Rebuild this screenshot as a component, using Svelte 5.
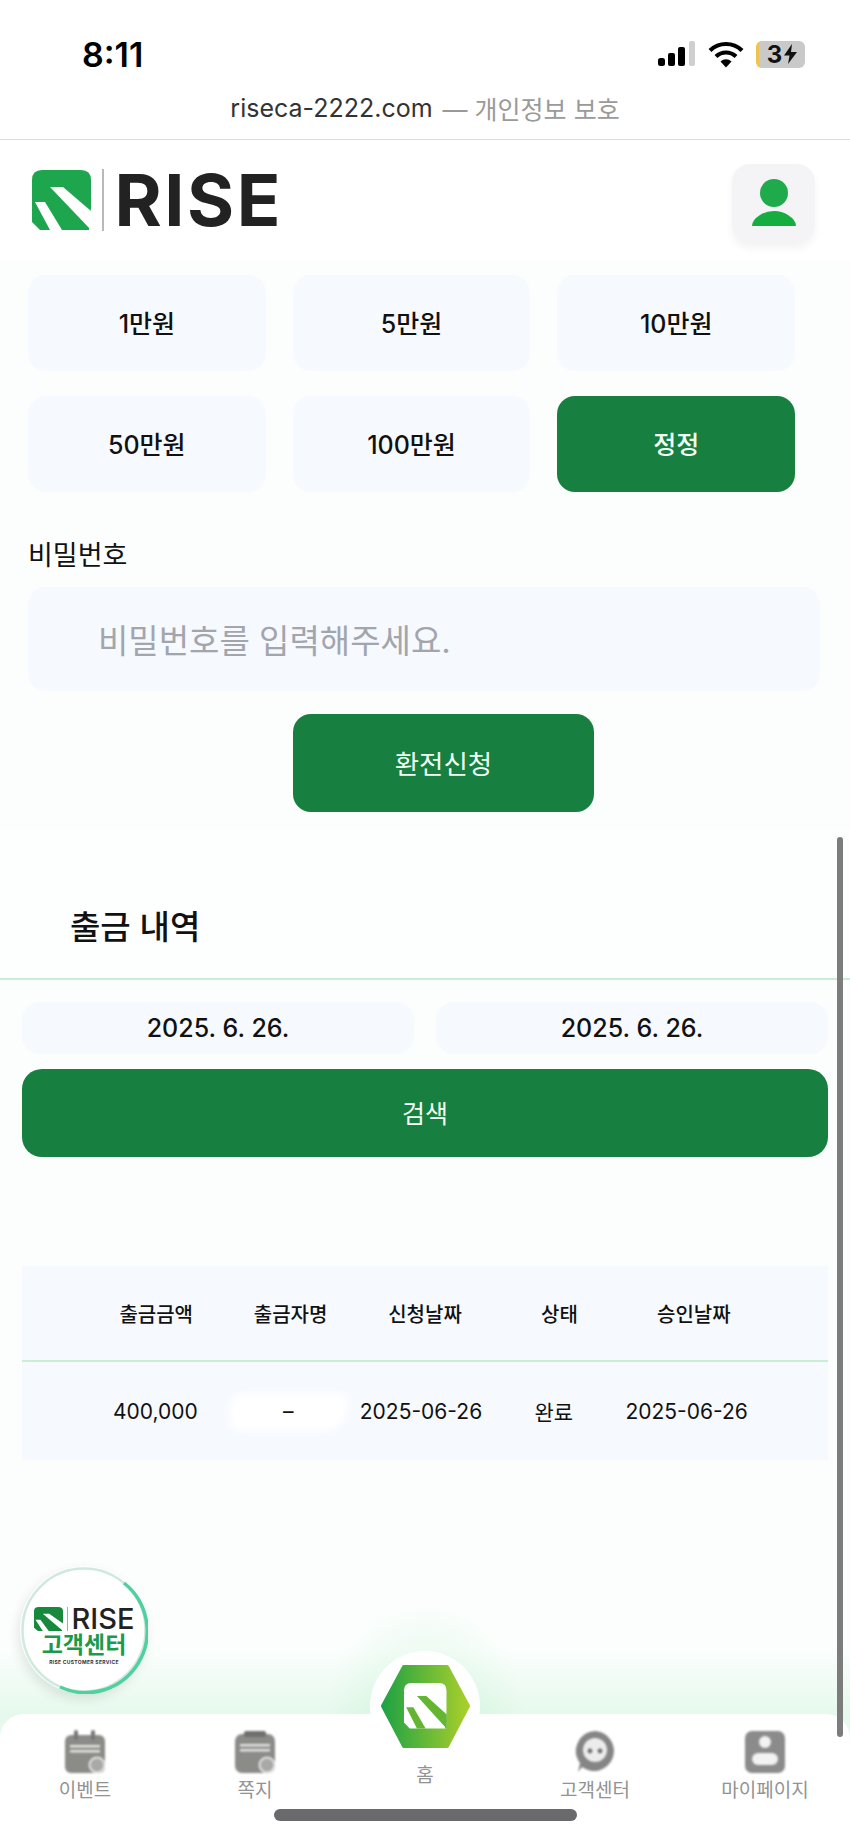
<script>
  const amounts = ["1만원", "5만원", "10만원", "50만원", "100만원"];
  const columns = ["출금금액", "출금자명", "신청날짜", "상태", "승인날짜"];
</script>

{#snippet mark(body, cut)}
  <path d="M10 0H49Q59 0 59 10V60H8L0 52V10Q0 0 10 0Z" fill={body} />
  <path d="M18 17H31L59 41V60Z" fill={cut} />
  <path d="M59 38V60H57Z" fill={cut} />
  <path d="M3 32H13L30 60H18Z" fill={cut} />
{/snippet}

<div class="page">
  <div class="status">
    <span class="time">8:11</span>
    <div class="status-icons">
      <svg width="38" height="26" viewBox="0 0 38 26">
        <rect x="0" y="17" width="7" height="8" rx="2.5" fill="#000" />
        <rect x="10" y="12" width="7" height="13" rx="2" fill="#000" />
        <rect x="20" y="6" width="7" height="19" rx="2" fill="#000" />
        <rect x="31" y="0" width="6" height="25" rx="2" fill="#cfcfcf" />
      </svg>
      <svg width="36" height="27" viewBox="0 0 36 27">
        <g fill="none" stroke="#000" stroke-width="4.2">
          <path d="M2 9.5A23 23 0 0 1 34 9.5" />
          <path d="M8 15.5A14.5 14.5 0 0 1 28 15.5" />
        </g>
        <path d="M12.5 20.5A8 8 0 0 1 23.5 20.5L18 26.5Z" fill="#000" />
      </svg>
      <div class="battery">
        <span>3</span>
        <svg width="13" height="20" viewBox="0 0 13 20"><path d="M8 0L0 11.5H5.5L4 20L13 8H7Z" fill="#111" /></svg>
      </div>
    </div>
  </div>

  <div class="urlbar">
    <span>riseca-2222.com</span><span class="muted">— 개인정보 보호</span>
  </div>

  <header>
    <div class="logo">
      <svg width="59" height="60" viewBox="0 0 59 60">{@render mark("#1ea64f", "#fff")}</svg>
      <i class="logo-line"></i>
      <span class="wordmark">RISE</span>
    </div>
    <button class="avatar" aria-label="내 정보">
      <svg width="46" height="54" viewBox="0 0 46 54">
        <circle cx="23" cy="17" r="14" fill="#1faa4c" />
        <path d="M1 50Q1 44 9 39Q15 35 23 35Q31 35 37 39Q45 44 45 50Z" fill="#15ad3f" />
      </svg>
    </button>
  </header>

  <div class="amounts">
    {#each amounts as amount}
      <button class="tile">{amount}</button>
    {/each}
    <button class="tile reset">정정</button>
  </div>

  <label class="pw-label" for="pw">비밀번호</label>
  <div class="pw-wrap">
    <input id="pw" type="password" placeholder="비밀번호를 입력해주세요." />
  </div>
  <button class="apply">환전신청</button>

  <section class="history-title"><h2>출금 내역</h2></section>

  <div class="dates">
    <div class="date">2025. 6. 26.</div>
    <div class="date">2025. 6. 26.</div>
  </div>
  <button class="search">검색</button>

  <div class="table">
    <div class="row head">
      {#each columns as column}
        <div>{column}</div>
      {/each}
    </div>
    <div class="row body">
      <div>400,000</div>
      <div class="masked"><i class="smear"></i><span>–</span></div>
      <div>2025-06-26</div>
      <div>완료</div>
      <div>2025-06-26</div>
    </div>
  </div>

  <nav>
    <div class="nav-item">
      <svg width="42" height="44" viewBox="0 0 42 44">
        <rect x="1" y="5" width="40" height="38" rx="6" fill="#8b8b88" />
        <rect x="10" y="0" width="4" height="10" rx="2" fill="#777" />
        <rect x="27" y="0" width="4" height="10" rx="2" fill="#777" />
        <rect x="6" y="15" width="30" height="2.5" fill="#e4e4e2" />
        <rect x="6" y="20" width="30" height="2.5" fill="#e4e4e2" />
        <circle cx="33" cy="35" r="7.5" fill="#a9a9a7" stroke="#e2e2e0" stroke-width="2" />
      </svg>
      <span>이벤트</span>
    </div>
    <div class="nav-item">
      <svg width="42" height="44" viewBox="0 0 42 44">
        <rect x="1" y="4" width="40" height="39" rx="7" fill="#8b8b88" />
        <rect x="10" y="1" width="22" height="6" rx="2" fill="#6f6f6d" />
        <rect x="6" y="14" width="30" height="2.5" fill="#e4e4e2" />
        <rect x="6" y="19" width="30" height="2.5" fill="#e4e4e2" />
        <circle cx="33" cy="35" r="7.5" fill="#a9a9a7" stroke="#e2e2e0" stroke-width="2" />
      </svg>
      <span>쪽지</span>
    </div>
    <div class="nav-item home-label"><span>홈</span></div>
    <div class="nav-item">
      <svg width="42" height="44" viewBox="0 0 42 44">
        <path d="M21 1A20 20 0 1 1 8 37L4 42L6 33A20 20 0 0 1 21 1Z" fill="#858585" />
        <circle cx="21" cy="20" r="12" fill="#ececec" />
        <circle cx="16" cy="21" r="2.4" fill="#6e6e6e" />
        <circle cx="26" cy="21" r="2.4" fill="#6e6e6e" />
      </svg>
      <span>고객센터</span>
    </div>
    <div class="nav-item">
      <svg width="42" height="44" viewBox="0 0 42 44">
        <rect x="1" y="1" width="40" height="42" rx="7" fill="#8b8b8b" />
        <circle cx="21" cy="12" r="6" fill="#f2f2f2" />
        <rect x="8" y="23" width="26" height="12" rx="6" fill="#f2f2f2" />
      </svg>
      <span>마이페이지</span>
    </div>
  </nav>

  <div class="home-glow"></div>
  <div class="home-btn">
    <svg width="91" height="85" viewBox="0 0 91 85">
      <defs>
        <linearGradient id="hex" x1="0" y1="0" x2="1" y2="0">
          <stop offset="0" stop-color="#1fa244" />
          <stop offset="1" stop-color="#a9cf2b" />
        </linearGradient>
      </defs>
      <path d="M24 3H67L88 42L67 82H24L3 42Z" fill="url(#hex)" stroke="url(#hex)" stroke-width="4" stroke-linejoin="round" />
      <g transform="translate(24 19) scale(0.72 0.76)">{@render mark("#fff", "#64b632")}</g>
    </svg>
  </div>

  <div class="cs-badge">
    <svg class="ring" width="128" height="128" viewBox="0 0 128 128">
      <circle cx="64" cy="64" r="61.5" fill="#fff" stroke="#cfe9df" stroke-width="2.5" />
      <path d="M104 17A61.5 61.5 0 0 1 40 121" fill="none" stroke="#4fd19f" stroke-width="3.5" />
    </svg>
    <div class="cs-logo">
      <svg width="29" height="24" viewBox="0 0 59 60" preserveAspectRatio="none">{@render mark("#17893c", "#fff")}</svg>
      <i></i>
      <span>RISE</span>
    </div>
    <div class="cs-name">고객센터</div>
    <div class="cs-sub">RISE CUSTOMER SERVICE</div>
  </div>

  <div class="scrollbar"></div>
  <div class="home-indicator"></div>
</div>

<style>
  :global(body) {
    margin: 0;
  }

  .page {
    position: relative;
    display: flex;
    flex-direction: column;
    width: 850px;
    height: 1839px;
    overflow: hidden;
    font-family: "Inter", "Noto Sans CJK KR", sans-serif;
    color: #111;
    background: linear-gradient(180deg, #fff 0, #fff 258px, #fbfefd 262px, #fbfefd 1650px, #e6f9ec 1714px);
  }

  button {
    border: none;
    font-family: inherit;
    cursor: pointer;
  }

  .status {
    display: flex;
    justify-content: space-between;
    align-items: center;
    height: 44px;
    padding: 32px 45px 0 82px;
    flex-shrink: 0;
  }

  .time {
    font-size: 34px;
    font-weight: 600;
    color: #000;
  }

  .status-icons {
    display: flex;
    align-items: center;
    gap: 12px;
  }

  .battery {
    display: flex;
    align-items: center;
    justify-content: center;
    gap: 2px;
    width: 49px;
    height: 27px;
    box-sizing: border-box;
    border-left: 3px solid #eec44a;
    border-radius: 6px;
    background: #c9c9c9;
    font-size: 24px;
    font-weight: 700;
    color: #111;
  }

  .urlbar {
    display: flex;
    justify-content: center;
    align-items: center;
    gap: 10px;
    height: 63px;
    flex-shrink: 0;
    border-bottom: 1.5px solid #d9d9d9;
    font-size: 25px;
    color: #333;
  }

  .muted {
    color: #9a9a9a;
  }

  header {
    display: flex;
    justify-content: space-between;
    align-items: center;
    height: 118px;
    padding: 0 35px 0 32px;
    flex-shrink: 0;
    background: #fff;
  }

  .logo {
    display: flex;
    align-items: center;
    height: 62px;
    margin-top: 2px;
  }

  .logo-line {
    width: 1.5px;
    height: 62px;
    margin: 0 11px 0 11px;
    background: #b9b9b9;
  }

  .wordmark {
    font-size: 72px;
    font-weight: 700;
    line-height: 62px;
    letter-spacing: 2.5px;
    color: #222;
  }

  .avatar {
    display: flex;
    align-items: center;
    justify-content: center;
    width: 83px;
    height: 78px;
    margin-top: 8px;
    border-radius: 18px;
    background: #f4f4f7;
    box-shadow: 0 6px 8px rgba(0, 0, 0, 0.05);
  }

  .amounts {
    display: grid;
    grid-template-columns: repeat(3, 1fr);
    gap: 25px 27px;
    width: 767px;
    margin: 17px 0 0 28px;
  }

  .tile {
    height: 96px;
    padding-bottom: 4px;
    border-radius: 18px;
    background: #f6f9fe;
    font-size: 25px;
    font-weight: 500;
    color: #111;
  }

  .reset {
    background: #177f3f;
    color: #f2fff5;
  }

  .pw-label {
    margin: 47px 0 0 28px;
    font-size: 27px;
    line-height: 34px;
  }

  .pw-wrap {
    margin: 14px 30px 0 28px;
  }

  input {
    display: block;
    width: 100%;
    height: 104px;
    box-sizing: border-box;
    padding: 4px 0 0 70px;
    border: none;
    border-radius: 18px;
    background: #f6f9fe;
    font-family: inherit;
    font-size: 33px;
  }

  input::placeholder {
    color: #a3a5ad;
  }

  .apply {
    width: 301px;
    height: 98px;
    margin: 23px 0 0 293px;
    padding-bottom: 3px;
    border-radius: 18px;
    background: #177f3f;
    font-size: 26.5px;
    color: #f2fff5;
  }

  .history-title {
    margin-top: 18px;
    padding: 67px 0 21px 70px;
    border-bottom: 2px solid #c9eed5;
    background: #fdffff;
  }

  h2 {
    margin: 0;
    font-size: 33px;
    font-weight: 500;
    line-height: 60px;
  }

  .dates {
    display: grid;
    grid-template-columns: 1fr 1fr;
    gap: 22px;
    margin: 22px 22px 0;
  }

  .date {
    height: 52px;
    border-radius: 18px;
    background: #f6f9fe;
    font-size: 25px;
    font-weight: 500;
    line-height: 52px;
    text-align: center;
  }

  .search {
    height: 88px;
    margin: 15px 22px 0;
    padding-bottom: 3px;
    flex-shrink: 0;
    border-radius: 20px;
    background: #177f3f;
    font-size: 25px;
    color: #f2fff5;
  }

  .table {
    margin: 109px 22px 0;
    background: #f6f9fe;
  }

  .row {
    display: grid;
    grid-template-columns: repeat(5, 1fr);
    padding: 0 67px;
    align-items: center;
    text-align: center;
  }

  .head {
    height: 94px;
    border-bottom: 2px solid #c9eed5;
    font-size: 20px;
    font-weight: 500;
  }

  .body {
    height: 98px;
    padding-right: 75px;
    font-size: 21px;
  }

  .masked {
    position: relative;
  }

  .masked span {
    position: relative;
  }

  .smear {
    position: absolute;
    left: 8px;
    top: -6px;
    width: 118px;
    height: 38px;
    border-radius: 14px 6px 24px 10px;
    background: #fff;
    filter: blur(4px);
  }

  nav {
    display: grid;
    grid-template-columns: repeat(5, 1fr);
    height: 125px;
    margin-top: auto;
    flex-shrink: 0;
    border-radius: 24px 24px 0 0;
    background: #fff;
  }

  .nav-item {
    display: flex;
    flex-direction: column;
    align-items: center;
    padding-top: 16px;
    font-size: 19px;
    color: #939393;
  }

  .nav-item svg {
    filter: blur(1px);
  }

  .nav-item span {
    margin-top: 4px;
    line-height: 26px;
  }

  .home-label span {
    margin-top: 33px;
  }

  .home-glow {
    position: absolute;
    left: 325px;
    top: 1603px;
    width: 200px;
    height: 111px;
    background: radial-gradient(ellipse at 50% 100%, rgba(150, 232, 170, 0.3), rgba(150, 232, 170, 0) 70%);
  }

  .home-btn {
    position: absolute;
    left: 370px;
    top: 1651px;
    display: flex;
    align-items: center;
    justify-content: center;
    width: 110px;
    height: 110px;
    border-radius: 50%;
    background: #fff;
  }

  .cs-badge {
    position: absolute;
    left: 20px;
    top: 1566px;
    display: flex;
    flex-direction: column;
    align-items: center;
    width: 128px;
    height: 128px;
    border-radius: 50%;
    box-shadow: -2px 5px 12px rgba(0, 0, 0, 0.1);
  }

  .ring {
    position: absolute;
    left: 0;
    top: 0;
  }

  .cs-logo,
  .cs-name,
  .cs-sub {
    position: relative;
  }

  .cs-logo {
    display: flex;
    align-items: center;
    margin-top: 41px;
    height: 24px;
  }

  .cs-logo i {
    width: 1px;
    height: 24px;
    margin: 0 4px;
    background: #aaa;
  }

  .cs-logo span {
    font-size: 29px;
    font-weight: 500;
    line-height: 24px;
    color: #222;
  }

  .cs-name {
    margin-top: 2px;
    font-size: 23px;
    font-weight: 700;
    line-height: 24px;
    color: #1c9a4b;
  }

  .cs-sub {
    margin-top: 1px;
    font-size: 5px;
    font-weight: 700;
    line-height: 8px;
    letter-spacing: 0.3px;
    color: #333;
    white-space: nowrap;
  }

  .scrollbar {
    position: absolute;
    left: 837px;
    top: 837px;
    width: 6px;
    height: 900px;
    border-radius: 3px;
    background: #7c7c7c;
  }

  .home-indicator {
    position: absolute;
    left: 274px;
    top: 1809px;
    width: 303px;
    height: 12px;
    border-radius: 6px;
    background: #6a6a6c;
  }
</style>
